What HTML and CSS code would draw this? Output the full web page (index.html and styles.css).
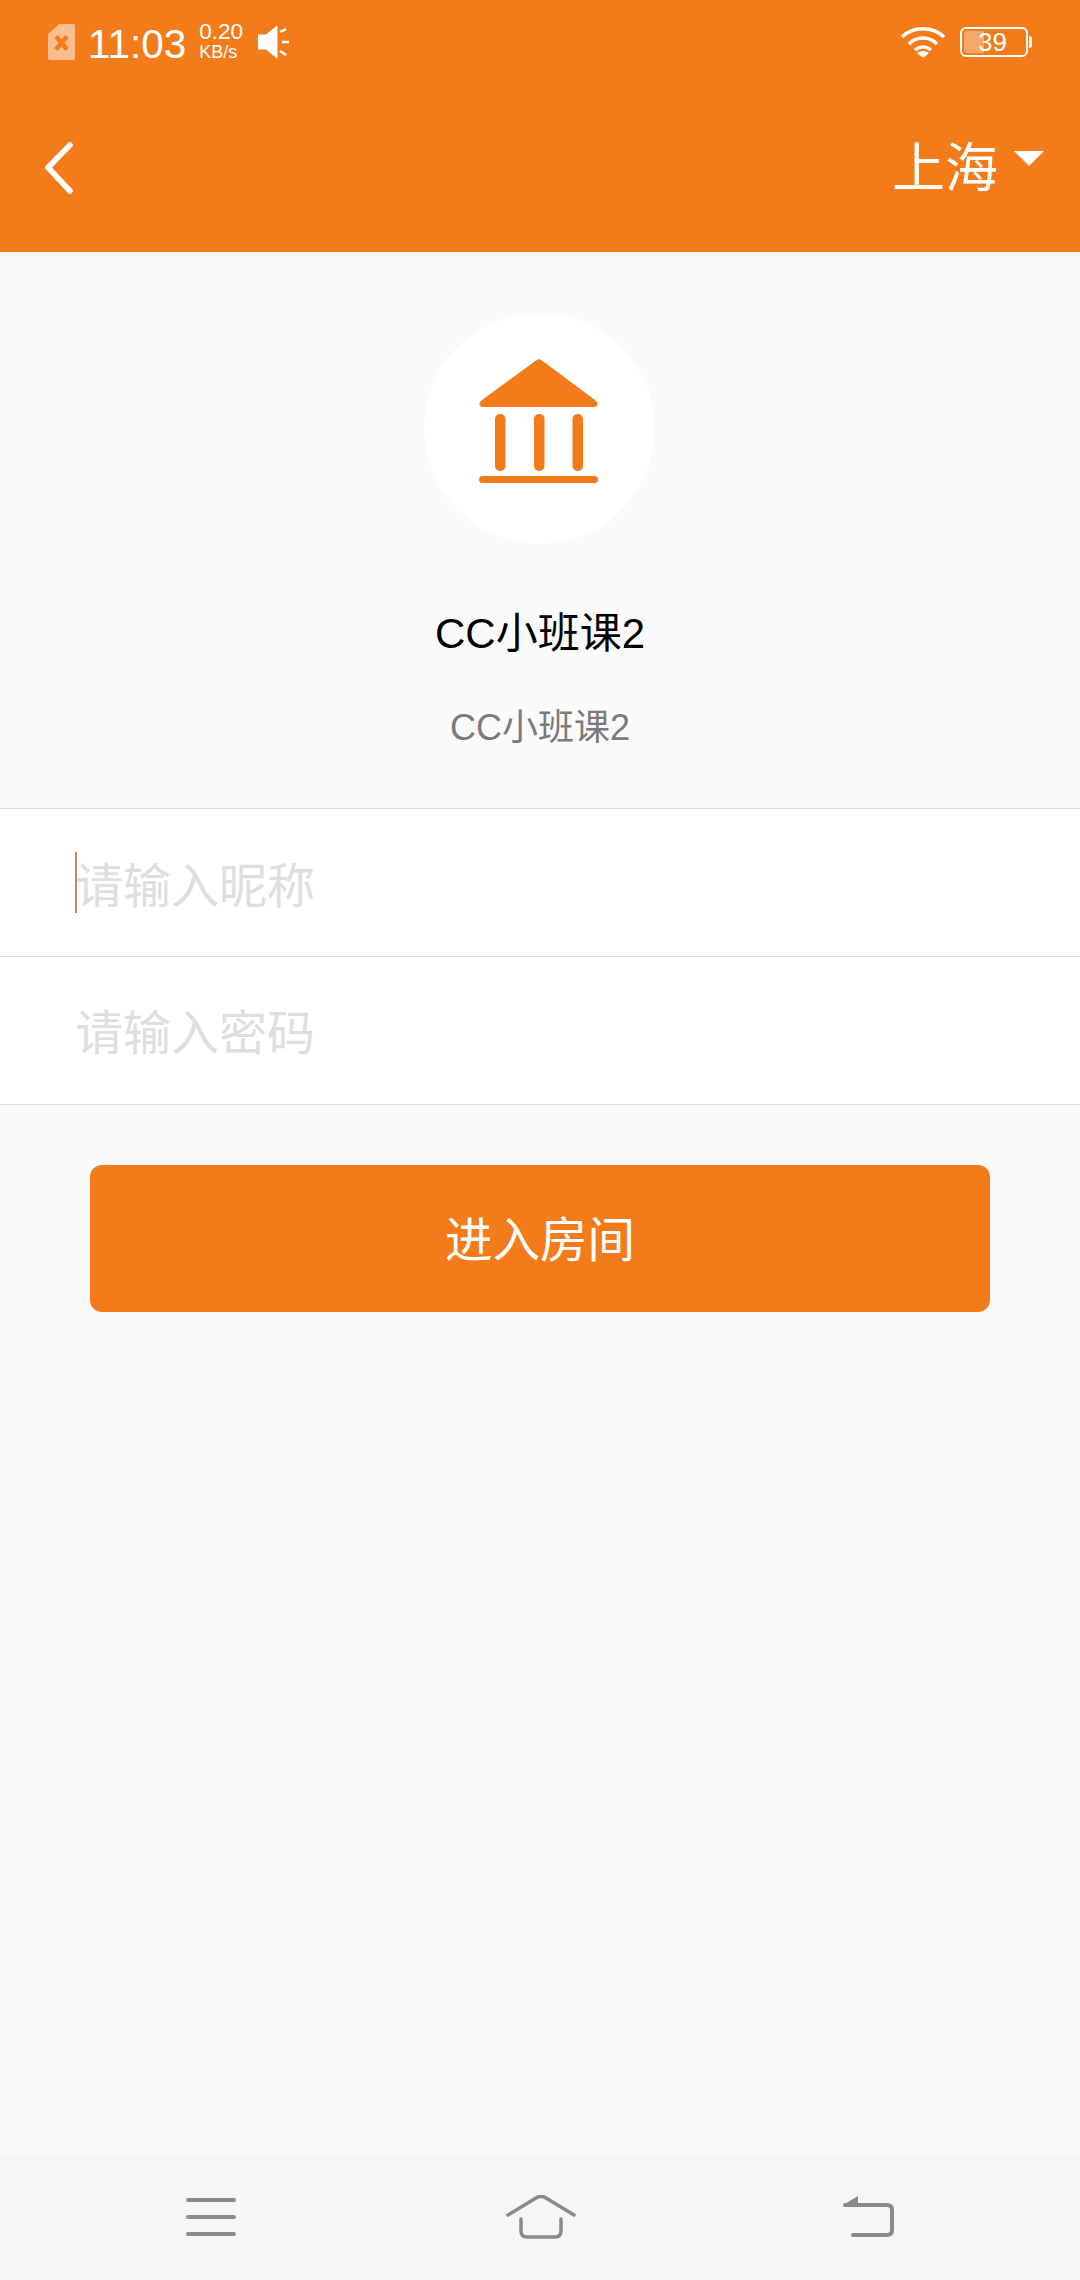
FILE: index.html
```html
<html>
<head>
  <meta charset="utf-8">
  <link rel="stylesheet" href="styles.css">
</head>
<body>
<div class="page">
  <div class="header">
    <div class="status">
      <svg class="sim" width="27" height="36" viewBox="0 0 27 36">
        <path d="M11 0H25a2 2 0 0 1 2 2V34a2 2 0 0 1-2 2H2a2 2 0 0 1-2-2V10z" fill="#fff" opacity=".5"/>
        <path d="M8 12.500l11 13M19 12.500L8 25.500" stroke="#f47b1a" stroke-width="4.500" fill="none"/>
      </svg>
      <span class="time">11:03</span>
      <div class="speed"><span>0.20</span><span class="unit">KB/s</span></div>
      <svg class="speaker" width="32" height="34" viewBox="0 0 32 34">
        <path d="M0 10H8L19 1V33L8 24H0z" fill="#fff" stroke="#fff" stroke-width="1" stroke-linejoin="round"/>
        <path d="M22 7l6-3M24 17h7M22 26l6 4" stroke="#fff" stroke-width="2.500" fill="none"/>
      </svg>
      <div class="status-right">
        <svg class="wifi" width="46" height="32" viewBox="0 0 46 32">
          <path d="M2 11C13 0 33 0 44 11M9 18C17 10 29 10 37 18M15 24C20 20 26 20 31 24" stroke="#fff" stroke-width="3.500" fill="none"/>
          <path d="M17 27Q23 23 29 27L23 32z" fill="#fff"/>
        </svg>
        <div class="battery">
          <div class="battery-fill"></div>
          <span class="battery-num">39</span>
        </div>
        <div class="battery-tip"></div>
      </div>
    </div>
    <div class="toolbar">
      <svg class="back" width="30" height="52" viewBox="0 0 30 52">
        <path d="M26 3L4 25.500L26 49" stroke="#fff" stroke-width="5.500" stroke-linecap="round" stroke-linejoin="round" fill="none"/>
      </svg>
      <div class="city">
        <span class="city-name">上海</span>
        <div class="arrow"></div>
      </div>
    </div>
  </div>

  <div class="room">
    <div class="logo">
      <svg width="231" height="231" viewBox="0 0 231 231">
        <path d="M112 47.500Q115 45 118 47.500L171 87Q174.500 90 173.500 92Q172.500 94 170 94H59Q56.500 94 55.500 92Q54.500 90 58 87z" fill="#f47b1a"/>
        <rect x="71" y="101" width="10.500" height="57" rx="5" fill="#f47b1a"/>
        <rect x="110" y="101" width="10.500" height="57" rx="5" fill="#f47b1a"/>
        <rect x="148.500" y="101" width="10.500" height="57" rx="5" fill="#f47b1a"/>
        <rect x="55" y="163" width="119" height="7" rx="3.500" fill="#f47b1a"/>
      </svg>
    </div>
    <div class="room-name">CC小班课2</div>
    <div class="room-desc">CC小班课2</div>
  </div>

  <div class="form">
    <div class="row">
      <div class="caret"></div>
      <span class="hint">请输入昵称</span>
    </div>
    <div class="row row-second">
      <span class="hint">请输入密码</span>
    </div>
  </div>

  <div class="enter-btn">进入房间</div>

  <div class="navbar">
    <svg width="50" height="40" viewBox="0 0 50 40">
      <path d="M2 3H48M2 20H48M2 37H48" stroke="#8a8a8a" stroke-width="4" stroke-linecap="round" fill="none"/>
    </svg>
    <svg class="nav-home" width="70" height="44" viewBox="0 0 70 44">
      <path d="M2 20L30 3Q35 0 40 3L68 20" stroke="#8a8a8a" stroke-width="3.500" stroke-linecap="round" fill="none"/>
      <path d="M15 24V36Q15 42 21 42H49Q55 42 55 36V24" stroke="#8a8a8a" stroke-width="3.500" stroke-linecap="round" fill="none"/>
    </svg>
    <svg width="51" height="42" viewBox="0 0 51 42">
      <path d="M0 9L15 0V9z" fill="#8a8a8a"/>
      <path d="M2 9H44Q49 9 49 14V34Q49 39 44 39H10" stroke="#8a8a8a" stroke-width="4" stroke-linecap="round" fill="none"/>
    </svg>
  </div>
</div>
</body>
</html>
```
FILE: styles.css
```css
body {
  margin: 0;
  background-color: #fafafa;
  font-family: "Liberation Sans", "Noto Sans CJK SC", sans-serif;
}

.page {
  display: flex;
  flex-direction: column;
  height: 2280px;
}

.header {
  height: 252px;
  background-color: #f47b1a;
  color: #fff;
}

.status {
  display: flex;
  align-items: center;
  height: 84px;
  padding: 0 48px 0 48px;
}

.time {
  margin: 4px 0 0 13px;
  font-size: 40.500px;
}

.speed {
  display: flex;
  flex-direction: column;
  margin-left: 13px;
  font-size: 22.500px;
  line-height: 20px;
}

.speed .unit {
  font-size: 18px;
  line-height: 20px;
}

.speaker {
  margin-left: 15px;
}

.status-right {
  display: flex;
  align-items: center;
  margin-left: auto;
}

.wifi {
  margin-right: -1px;
}

.battery {
  position: relative;
  box-sizing: border-box;
  width: 68px;
  height: 30px;
  margin-left: 15px;
  border: 2px solid #fff;
  border-radius: 6px;
}

.battery-fill {
  width: 20px;
  height: 22px;
  margin: 2px;
  border-radius: 3px 0 0 3px;
  background-color: #fff;
  opacity: .35;
}

.battery-num {
  position: absolute;
  top: 0;
  left: 16px;
  font-size: 26px;
  line-height: 26px;
}

.battery-tip {
  width: 3px;
  height: 12px;
  margin-left: 1px;
  border-radius: 0 3px 3px 0;
  background-color: #fff;
}

.toolbar {
  display: flex;
  align-items: center;
  justify-content: space-between;
  height: 168px;
  padding: 0 36px 0 44px;
  box-sizing: border-box;
}

.city {
  display: flex;
  font-size: 53px;
  line-height: 72px;
}

.city-name {
  margin-top: 2px;
}

.arrow {
  width: 0;
  height: 0;
  margin: 20px 0 0 16px;
  border-left: 15px solid transparent;
  border-right: 15px solid transparent;
  border-top: 15px solid #fff;
}

.room {
  display: flex;
  flex-direction: column;
  align-items: center;
  height: 556px;
  box-sizing: border-box;
  padding-top: 61px;
}

.logo {
  width: 231px;
  height: 231px;
  margin-right: 1px;
  border-radius: 50%;
  background-color: #fff;
}

.room-name {
  margin-top: 62px;
  font-size: 42px;
  line-height: 56px;
  color: #000;
}

.room-desc {
  margin-top: 42px;
  font-size: 36px;
  line-height: 48px;
  color: #7b7b7b;
}

.form {
  border-top: 1px solid #dedede;
  background-color: #fff;
}

.row {
  position: relative;
  display: flex;
  align-items: center;
  box-sizing: border-box;
  height: 148px;
  padding: 0 0 2px 75px;
  border-bottom: 1px solid #dedede;
}

.row-second {
  padding-bottom: 4px;
}

.hint {
  font-size: 48px;
  color: #dedede;
}

.caret {
  position: absolute;
  left: 75px;
  top: 43px;
  width: 2px;
  height: 61px;
  background-color: #cc8a4e;
}

.enter-btn {
  margin: 60px 90px 0;
  height: 147px;
  border-radius: 12px;
  background-color: #f47b1a;
  color: #fff;
  font-size: 47.500px;
  line-height: 151px;
  text-align: center;
}

.navbar {
  display: flex;
  align-items: center;
  justify-content: space-between;
  height: 126px;
  margin-top: auto;
  padding: 0 186px;
  box-sizing: border-box;
  background-color: #f6f6f6;
}

.nav-home {
  margin-left: 2px;
}
```
